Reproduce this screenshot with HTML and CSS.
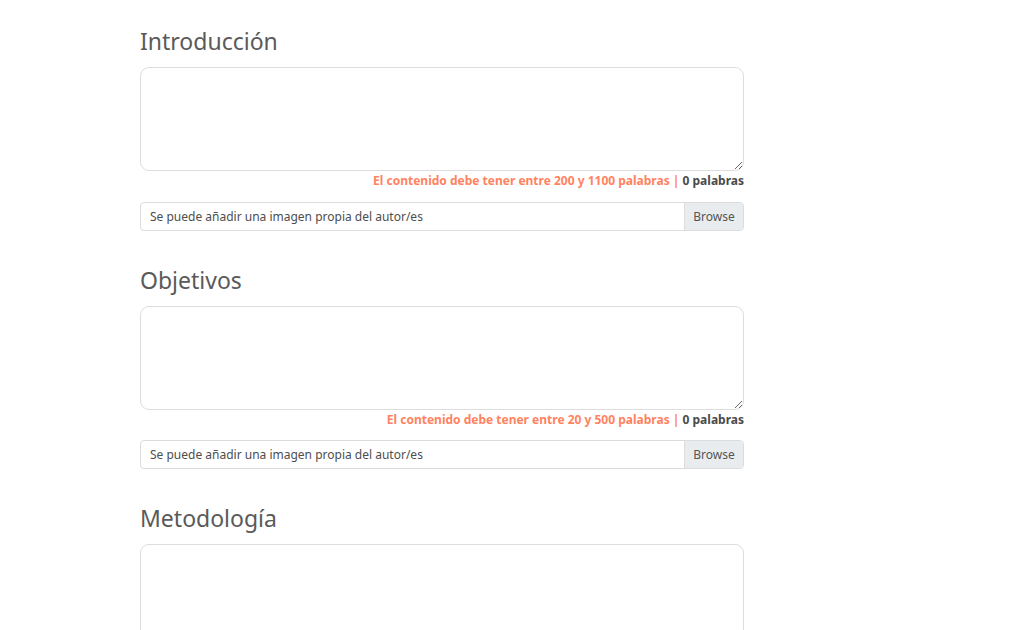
FILE: index.html
```html
<!DOCTYPE html>
<html lang="es">
<head>
    <meta charset="UTF-8">
    <meta name="viewport" content="width=device-width, initial-scale=1.0">
    <title>Proyecto - Contenido</title>
    <link rel="stylesheet" href="styles.css">
</head>
<body>

<div class="container">

    <!-- Introduccion -->
    <div class="section">
        <h2>Introducción</h2>
        <textarea class="editor" id="introText"></textarea>
        <p class="counter"><span class="limit">El contenido debe tener entre 200 y 1100 palabras |</span> <span class="count">0 palabras</span></p>
        <div class="custom-file">
            <input type="file" id="introImg" class="file-input">
            <label for="introImg" class="file-label">
                <span class="file-text">Se puede añadir una imagen propia del autor/es</span>
                <span class="file-btn">Browse</span>
            </label>
        </div>
    </div>

    <!-- Objetivos -->
    <div class="section">
        <h2>Objetivos</h2>
        <textarea class="editor" id="objText"></textarea>
        <p class="counter"><span class="limit">El contenido debe tener entre 20 y 500 palabras |</span> <span class="count">0 palabras</span></p>
        <div class="custom-file">
            <input type="file" id="objImg" class="file-input">
            <label for="objImg" class="file-label">
                <span class="file-text">Se puede añadir una imagen propia del autor/es</span>
                <span class="file-btn">Browse</span>
            </label>
        </div>
    </div>

    <!-- Metodologia -->
    <div class="section">
        <h2>Metodología</h2>
        <textarea class="editor" id="metText"></textarea>
    </div>

</div>

</body>
</html>
```

FILE: styles.css
```css
body {
    font-family: 'Noto Sans', 'Open Sans', sans-serif;
    margin: 0;
    padding: 0;
    background: #fff;
    color: #555;
    height: 100vh;
    overflow: hidden;
}

.container {
    width: 604px;
    margin-left: 140px;
    padding-top: 27px;
}

.section {
    margin-bottom: 35px;
}

h2 {
    font-size: 23px;
    font-weight: 400;
    line-height: 28px;
    color: #5a5a5a;
    margin: 0 0 12px;
}

.editor {
    display: block;
    width: 100%;
    height: 104px;
    box-sizing: border-box;
    border: 1px solid #ddd;
    border-radius: 9px;
    padding: 8px 12px;
    font-family: inherit;
    outline: none;
}

.counter {
    margin: 1px 0 0;
    font-size: 12px;
    font-weight: 700;
    line-height: 18px;
    text-align: right;
}

.limit {
    color: #ff8360;
}

.count {
    color: #4a4a4a;
}

.custom-file {
    margin-top: 11.5px;
}

.file-input {
    display: none;
}

.file-label {
    display: flex;
    height: 29px;
    box-sizing: border-box;
    border: 1px solid #dcdcdc;
    border-radius: 4px;
    overflow: hidden;
    font-size: 12px;
    color: #4e4e4e;
    cursor: pointer;
}

.file-text {
    flex: 1;
    padding: 0 9px;
    line-height: 27px;
}

.file-btn {
    width: 58px;
    text-align: center;
    line-height: 27px;
    background: #e9ecef;
    border-left: 1px solid #dcdcdc;
    color: #555;
}
```
